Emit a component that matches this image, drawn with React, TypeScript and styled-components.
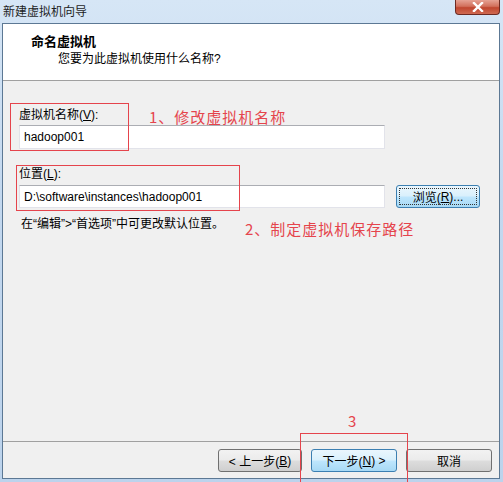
import React from "react";
import styled, { createGlobalStyle } from "styled-components";

const Global = createGlobalStyle`
  html, body { margin: 0; padding: 0; background: #fff; }
  body { font-family: "Liberation Sans", "Noto Sans CJK SC", sans-serif; font-size: 12px; color: #000; }
`;

const UI = `"Liberation Sans", "Noto Sans CJK SC", sans-serif`;
const RED = "#e5444c";

const Window = styled.div`
  position: relative;
  width: 503px;
  height: 482px;
  overflow: hidden;
  display: flex;
  flex-direction: column;
  background: linear-gradient(180deg, #d6e6f6 0%, #c3d8ef 40%, #bcd3ec 100%);
`;

const TitleBar = styled.div`
  height: 23px;
  display: flex;
  justify-content: space-between;
  align-items: flex-start;
  padding-left: 3px;
  flex-shrink: 0;
`;

const Title = styled.div`
  font-family: ${UI};
  font-size: 12px;
  line-height: 24px;
  color: #1e1e1e;
`;

const CloseButton = styled.div`
  width: 45px;
  height: 15px;
  margin-right: 3px;
  border: 1px solid #6d2a22;
  border-top: none;
  border-radius: 0 0 4px 4px;
  background: linear-gradient(180deg, #e6a294 0%, #d2705c 45%, #c0462f 55%, #cf6a52 100%);
  display: flex;
  align-items: center;
  justify-content: center;
  box-sizing: border-box;
`;

const Client = styled.div`
  flex: 1;
  margin: 0 3px 3px 2px;
  border: 1px solid #5c7894;
  background: #f0f0f0;
  display: flex;
  flex-direction: column;
`;

const Header = styled.div`
  height: 57px;
  background: #fff;
  border-bottom: 1px solid #a0a0a0;
  padding: 9px 0 0 28px;
  box-sizing: border-box;
  flex-shrink: 0;
`;

const HeaderTitle = styled.div`
  font-family: ${UI};
  font-weight: bold;
  font-size: 13px;
  line-height: 17px;
`;

const HeaderSub = styled.div`
  font-family: ${UI};
  font-size: 12px;
  line-height: 17px;
  margin-top: 1px;
  padding-left: 27px;
`;

const Body = styled.div`
  flex: 1;
  padding: 26px 0 0 16px;
  display: flex;
  flex-direction: column;
`;

const Label = styled.div<{ $gap?: number }>`
  font-family: ${UI};
  font-size: 12px;
  line-height: 16px;
  margin-top: ${(p) => p.$gap ?? 0}px;
`;

const Row = styled.div<{ $gap?: number }>`
  display: flex;
  align-items: center;
  gap: 11px;
  margin-top: ${(p) => p.$gap ?? 0}px;
`;

const Input = styled.div<{ $h: number }>`
  width: 366px;
  height: ${(p) => p.$h}px;
  box-sizing: border-box;
  background: #fff;
  border: 1px solid #e2e3ea;
  border-top-color: #abadb3;
  padding-left: 4px;
  display: flex;
  align-items: center;
  font-family: ${UI};
  font-size: 12px;
`;

const Button = styled.div<{ $focus?: boolean; $w?: number }>`
  width: ${(p) => p.$w ?? 84}px;
  height: 23px;
  box-sizing: border-box;
  border: 1px solid ${(p) => (p.$focus ? "#3c7fb1" : "#707070")};
  border-radius: 3px;
  background: ${(p) =>
    p.$focus
      ? "linear-gradient(180deg, #eaf6fd 0%, #d9f0fc 48%, #bee6fd 52%, #a7d9f5 100%)"
      : "linear-gradient(180deg, #f2f2f2 0%, #ebebeb 48%, #dddddd 52%, #cfcfcf 100%)"};
  display: flex;
  align-items: center;
  justify-content: center;
  font-family: ${UI};
  font-size: 12px;
  color: #000;
  position: relative;
`;

const FocusRing = styled.div`
  position: absolute;
  inset: 2px;
  border: 1px dotted #333;
  border-radius: 1px;
`;

const Helper = styled.div`
  font-family: ${UI};
  font-size: 12px;
  line-height: 16px;
  margin-top: 8px;
  margin-left: 2px;
`;

const Footer = styled.div`
  flex-shrink: 0;
  border-top: 1px solid #a0a0a0;
  padding: 7px 7px 6px 0;
  display: flex;
  justify-content: flex-end;
  gap: 9px;
`;

const U = styled.span`
  text-decoration: underline;
`;

const Box = styled.div<{ $x: number; $y: number; $w: number; $h: number }>`
  position: absolute;
  left: ${(p) => p.$x}px;
  top: ${(p) => p.$y}px;
  width: ${(p) => p.$w}px;
  height: ${(p) => p.$h}px;
  border: 1px solid ${RED};
  box-sizing: border-box;
  pointer-events: none;
`;

const Note = styled.div<{ $x: number; $y: number }>`
  position: absolute;
  left: ${(p) => p.$x}px;
  top: ${(p) => p.$y}px;
  color: ${RED};
  font-family: "Noto Sans CJK SC", sans-serif;
  font-size: 15px;
  line-height: 20px;
  letter-spacing: 1px;
  white-space: nowrap;
`;

export default function App() {
  return (
    <>
      <Global />
      <Window>
        <TitleBar>
          <Title>新建虚拟机向导</Title>
          <CloseButton>
            <svg width="12" height="10" viewBox="0 0 12 10">
              <path d="M2 1 L10 9 M10 1 L2 9" stroke="#fff" strokeWidth="2.4" strokeLinecap="square" />
            </svg>
          </CloseButton>
        </TitleBar>
        <Client>
          <Header>
            <HeaderTitle>命名虚拟机</HeaderTitle>
            <HeaderSub>您要为此虚拟机使用什么名称?</HeaderSub>
          </Header>
          <Body>
            <Label>
              虚拟机名称(<U>V</U>):
            </Label>
            <Row $gap={2}>
              <Input $h={24}>hadoop001</Input>
            </Row>
            <Label $gap={17}>
              位置(<U>L</U>):
            </Label>
            <Row $gap={3}>
              <Input $h={23}>D:\software\instances\hadoop001</Input>
              <Button $focus>
                <FocusRing />
                浏览(<U>R</U>)...
              </Button>
            </Row>
            <Helper>在“编辑”&gt;“首选项”中可更改默认位置。</Helper>
          </Body>
          <Footer>
            <Button $w={84}>
              &lt; 上一步(<U>B</U>)
            </Button>
            <Button $focus $w={86}>
              下一步(<U>N</U>) &gt;
            </Button>
            <Button $w={86}>取消</Button>
          </Footer>
        </Client>

        <Box $x={10} $y={103} $w={119} $h={48} />
        <Box $x={16} $y={165} $w={224} $h={46} />
        <Box $x={300} $y={433} $w={108} $h={55} />
        <Note $x={149} $y={107}>1、修改虚拟机名称</Note>
        <Note $x={245} $y={219}>2、制定虚拟机保存路径</Note>
        <Note $x={348} $y={411}>3</Note>
      </Window>
    </>
  );
}
